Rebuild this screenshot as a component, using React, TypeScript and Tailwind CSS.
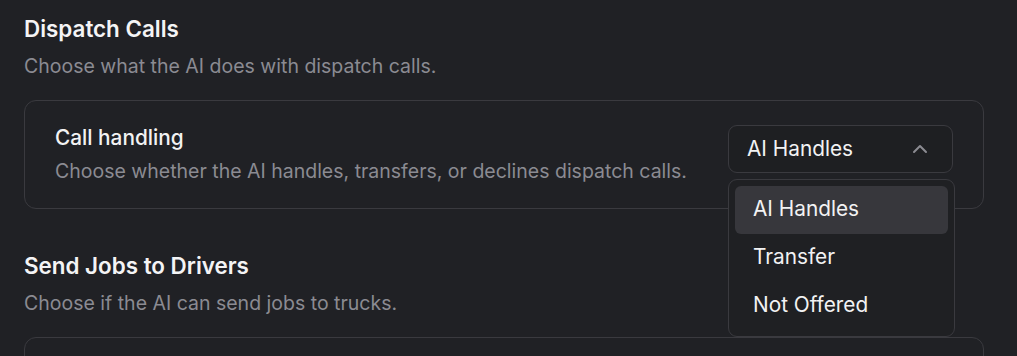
import React from 'react';

const options = ['AI Handles', 'Transfer', 'Not Offered'];

const ChevronUp: React.FC = () => (
  <svg width="24" height="24" viewBox="0 0 24 24" fill="none" stroke="currentColor" strokeWidth="2" strokeLinecap="round" strokeLinejoin="round">
    <path d="m18 15-6-6-6 6" />
  </svg>
);

const App: React.FC = () => {
  return (
    <div
      className="min-h-screen bg-[#202125] pl-6 pr-[33px] pt-[15px] pb-10"
      style={{ fontFamily: 'Inter, "Noto Sans", sans-serif' }}
    >
      <section>
        <h2 className="text-[22.4px] leading-[28px] font-semibold text-[#f4f4f5]">Dispatch Calls</h2>
        <p className="mt-[9px] text-[19.5px] leading-[28px] text-[#8b8b92]">Choose what the AI does with dispatch calls.</p>

        <div className="mt-5 rounded-xl border border-[#3a3a3f] px-[30px] pt-[23px] pb-[23px] flex items-start justify-between">
          <div>
            <div className="text-[20.8px] leading-[28px] font-medium text-[#f2f2f3]">Call handling</div>
            <div className="mt-[5px] text-[19.5px] leading-[28px] text-[#8b8b92]">
              Choose whether the AI handles, transfers, or declines dispatch calls.
            </div>
          </div>

          <div className="relative mt-px">
            <button className="w-[225px] h-[48px] rounded-[9px] border border-[#3a3a3f] bg-[#1e1f22] pl-[18px] pr-5 flex items-center justify-between text-[20.8px] text-[#f2f2f3]">
              <span>AI Handles</span>
              <span className="text-[#8b8b92]">
                <ChevronUp />
              </span>
            </button>

            <div className="absolute left-0 top-[calc(100%+6px)] z-10 w-[227px] rounded-[9px] border border-[#3a3a3f] bg-[#1f2023] p-[6px]">
              {options.map((opt, i) => (
                <div
                  key={opt}
                  className={
                    i === 0
                      ? 'h-12 rounded-md bg-[#37373c] pl-[18px] pb-[3px] flex items-center text-[20.8px] text-[#f2f2f3]'
                      : 'h-12 rounded-md pl-[18px] pb-[3px] flex items-center text-[20.8px] text-[#f2f2f3]'
                  }
                >
                  {opt}
                </div>
              ))}
            </div>
          </div>
        </div>
      </section>

      <section className="mt-[43px]">
        <h2 className="text-[22.4px] leading-[28px] font-semibold text-[#f4f4f5]">Send Jobs to Drivers</h2>
        <p className="mt-[9px] text-[19.5px] leading-[28px] text-[#8b8b92]">Choose if the AI can send jobs to trucks.</p>

        <div className="mt-5 h-[110px] rounded-xl border border-[#3a3a3f]"></div>
      </section>
    </div>
  );
};

export default App;
